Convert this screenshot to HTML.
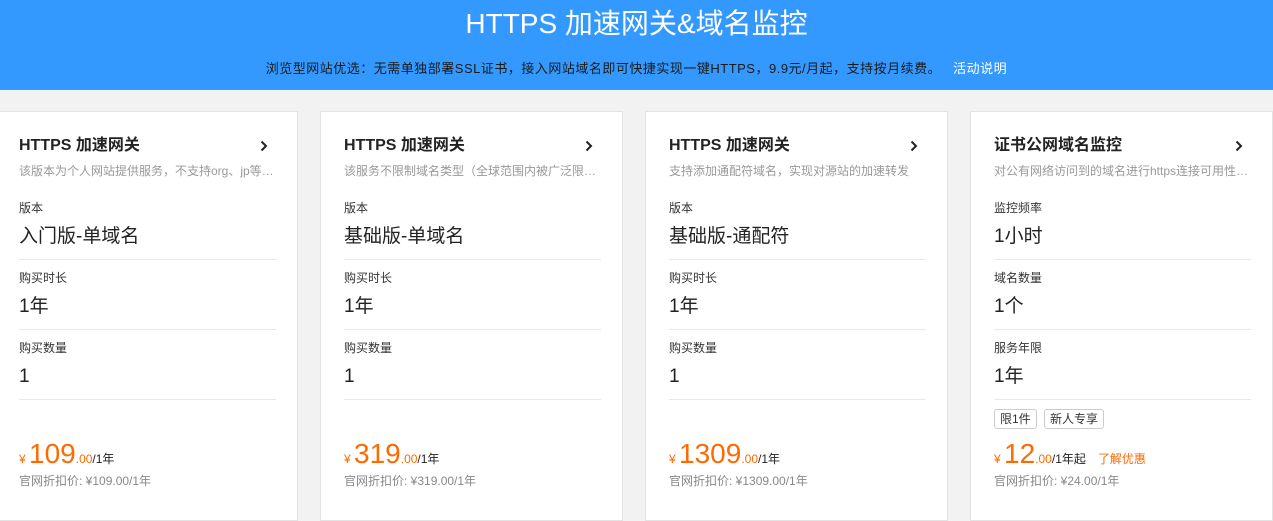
<!DOCTYPE html>
<html><head><meta charset="utf-8"><style>
body{margin:0;width:1273px;height:511px;overflow:hidden;background:#f2f2f2;font-family:"Liberation Sans","Noto Sans CJK SC",sans-serif;position:relative}
.hd{position:absolute;left:0;top:0;width:1273px;height:90px;background:#3399fe;color:#fff}
.hd h1{position:absolute;left:0;right:0;top:6px;margin:0;text-align:center;font-size:28px;font-weight:normal;line-height:36px}
.hd p{position:absolute;left:0;right:0;top:60px;margin:0;text-align:center;font-size:13px;color:#1a1a1a;line-height:18px;letter-spacing:0.5px}
.hd p span{color:#fff;margin-left:12px}
.card{position:absolute;top:111px;width:303px;height:410px;background:#fff;border:1px solid #e3e3e3;box-sizing:border-box}
.in{position:absolute;left:23px;width:257px;top:0}
div{line-height:1.2}
.t{position:absolute;top:24px;font-size:16px;font-weight:bold;color:#222;white-space:nowrap;line-height:20px}
.ar{position:absolute;left:240px;top:24px;width:10px;height:20px}
.d{position:absolute;top:51px;font-size:12px;color:#999;white-space:nowrap;width:257px;overflow:hidden;line-height:16px}
.l{position:absolute;font-size:12px;color:#333;line-height:16px}
.v{position:absolute;font-size:19px;color:#222;line-height:24px}
.hr{position:absolute;left:0;width:257px;border-top:1px solid #e8e8e8}
.pr{position:absolute;top:325px;color:#ff6a00;white-space:nowrap;line-height:34px}
.pr .y{font-size:12px}.pr .b{font-size:28px}.pr .s{font-size:12px}.pr .u{font-size:12px;color:#222}
.n{position:absolute;top:361px;font-size:12px;color:#888;line-height:16px}
.tag{position:absolute;top:297px;font-size:12px;color:#333;border:1px solid #ccc;border-radius:3px;padding:1px 5px;line-height:16px}
</style></head><body>
<div class="hd"><h1>HTTPS 加速网关&amp;域名监控</h1><p>浏览型网站优选：无需单独部署SSL证书，接入网站域名即可快捷实现一键HTTPS，9.9元/月起，支持按月续费。<span>活动说明</span></p></div>

<svg width="0" height="0" style="position:absolute"><defs><symbol id="c" viewBox="0 0 10 20"><path d="M2.5 5.5 L7 10 L2.5 14.5" fill="none" stroke="#222" stroke-width="2"/></symbol></defs></svg>

<div class="card" style="left:-5px"><div class="in">
<div class="t">HTTPS 加速网关</div><svg class="ar"><use href="#c"/></svg>
<div class="d">该版本为个人网站提供服务，不支持org、jp等…</div>
<div class="l" style="top:88px">版本</div><div class="v" style="top:113px">入门版-单域名</div><div class="hr" style="top:147px"></div>
<div class="l" style="top:158px">购买时长</div><div class="v" style="top:183px">1年</div><div class="hr" style="top:217px"></div>
<div class="l" style="top:228px">购买数量</div><div class="v" style="top:253px">1</div><div class="hr" style="top:287px"></div>
<div class="pr"><span class="y">¥ </span><span class="b">109</span><span class="s">.00</span><span class="u">/1年</span></div>
<div class="n">官网折扣价: ¥109.00/1年</div>
</div></div>

<div class="card" style="left:320px"><div class="in">
<div class="t">HTTPS 加速网关</div><svg class="ar"><use href="#c"/></svg>
<div class="d">该服务不限制域名类型（全球范围内被广泛限…</div>
<div class="l" style="top:88px">版本</div><div class="v" style="top:113px">基础版-单域名</div><div class="hr" style="top:147px"></div>
<div class="l" style="top:158px">购买时长</div><div class="v" style="top:183px">1年</div><div class="hr" style="top:217px"></div>
<div class="l" style="top:228px">购买数量</div><div class="v" style="top:253px">1</div><div class="hr" style="top:287px"></div>
<div class="pr"><span class="y">¥ </span><span class="b">319</span><span class="s">.00</span><span class="u">/1年</span></div>
<div class="n">官网折扣价: ¥319.00/1年</div>
</div></div>

<div class="card" style="left:645px"><div class="in">
<div class="t">HTTPS 加速网关</div><svg class="ar"><use href="#c"/></svg>
<div class="d">支持添加通配符域名，实现对源站的加速转发</div>
<div class="l" style="top:88px">版本</div><div class="v" style="top:113px">基础版-通配符</div><div class="hr" style="top:147px"></div>
<div class="l" style="top:158px">购买时长</div><div class="v" style="top:183px">1年</div><div class="hr" style="top:217px"></div>
<div class="l" style="top:228px">购买数量</div><div class="v" style="top:253px">1</div><div class="hr" style="top:287px"></div>
<div class="pr"><span class="y">¥ </span><span class="b">1309</span><span class="s">.00</span><span class="u">/1年</span></div>
<div class="n">官网折扣价: ¥1309.00/1年</div>
</div></div>

<div class="card" style="left:970px"><div class="in">
<div class="t">证书公网域名监控</div><svg class="ar"><use href="#c"/></svg>
<div class="d">对公有网络访问到的域名进行https连接可用性…</div>
<div class="l" style="top:88px">监控频率</div><div class="v" style="top:113px">1小时</div><div class="hr" style="top:147px"></div>
<div class="l" style="top:158px">域名数量</div><div class="v" style="top:183px">1个</div><div class="hr" style="top:217px"></div>
<div class="l" style="top:228px">服务年限</div><div class="v" style="top:253px">1年</div><div class="hr" style="top:287px"></div>
<div class="tag" style="left:0">限1件</div><div class="tag" style="left:50px">新人专享</div>
<div class="pr"><span class="y">¥ </span><span class="b">12</span><span class="s">.00</span><span class="u">/1年起</span><span class="s" style="margin-left:12px">了解优惠</span></div>
<div class="n">官网折扣价: ¥24.00/1年</div>
</div></div>
</body></html>
